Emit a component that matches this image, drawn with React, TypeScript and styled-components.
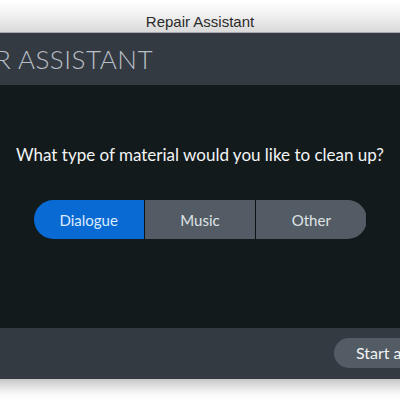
import * as React from 'react';
import styled, { createGlobalStyle } from 'styled-components';

const GlobalStyle = createGlobalStyle`
  html, body {
    margin: 0;
    padding: 0;
    background: #ffffff;
    overflow: hidden;
  }
  body {
    width: 400px;
    height: 400px;
  }
`;

const Stage = styled.div`
  width: 400px;
  height: 400px;
  display: flex;
  justify-content: center;
  overflow: hidden;
`;

const Window = styled.div`
  flex: 0 0 600px;
  display: flex;
  flex-direction: column;
  height: 379px;
  box-shadow: 0 6px 14px rgba(0, 0, 0, 0.28);
`;

const TitleBar = styled.div`
  height: 33px;
  display: flex;
  align-items: flex-end;
  justify-content: center;
  padding-bottom: 2px;
  box-sizing: border-box;
  background: linear-gradient(#ffffff 0%, #f4f4f4 40%, #d9d9d9 100%);
  border-bottom: 1px solid #a9a9ad;
  font-family: 'Liberation Sans', Arial, sans-serif;
  font-size: 15px;
  color: #2a2a2a;
`;

const Header = styled.header`
  height: 52px;
  display: flex;
  align-items: center;
  padding-left: 24px;
  background: #343a42;
  font-family: Lato, 'Open Sans', sans-serif;
  font-weight: 300;
  font-size: 26px;
  letter-spacing: 0.5px;
  color: #b9bfc6;
`;

const Body = styled.main`
  flex: 1;
  display: flex;
  flex-direction: column;
  align-items: center;
  padding-top: 59px;
  background: #131a1c;
  font-family: Lato, 'Open Sans', sans-serif;
`;

const Question = styled.h2`
  margin: 0;
  font-size: 17px;
  font-weight: 400;
  color: #f2f4f5;
`;

const Segments = styled.div`
  margin-top: 35px;
  display: flex;
  width: 333px;
  height: 39px;
  border-radius: 20px;
  overflow: hidden;
  gap: 1px;
  background: #0d1215;
`;

const Segment = styled.button<{ $active?: boolean }>`
  flex: 1;
  border: none;
  padding: 0;
  font-family: Lato, 'Open Sans', sans-serif;
  font-size: 15px;
  color: ${p => (p.$active ? '#dcebfb' : '#dfe3e6')};
  background: ${p => (p.$active ? '#0a6ad4' : '#535c64')};
`;

const Footer = styled.footer`
  height: 51px;
  display: flex;
  align-items: center;
  justify-content: flex-end;
  padding-right: 30px;
  background: #343a42;
`;

const StartButton = styled.button`
  height: 30px;
  margin-top: -2px;
  padding: 0 22px;
  border: none;
  border-radius: 15px;
  background: #535c64;
  color: #f2f4f5;
  font-family: Lato, 'Open Sans', sans-serif;
  font-size: 16px;
`;

const OPTIONS = ['Dialogue', 'Music', 'Other'];

export default function App() {
  const [choice, setChoice] = React.useState('Dialogue');

  return (
    <>
      <GlobalStyle />
      <Stage>
        <Window>
          <TitleBar>Repair Assistant</TitleBar>
          <Header>REPAIR ASSISTANT</Header>
          <Body>
            <Question>What type of material would you like to clean up?</Question>
            <Segments>
              {OPTIONS.map(option => (
                <Segment key={option} $active={option === choice} onClick={() => setChoice(option)}>
                  {option}
                </Segment>
              ))}
            </Segments>
          </Body>
          <Footer>
            <StartButton>Start analysis</StartButton>
          </Footer>
        </Window>
      </Stage>
    </>
  );
}
